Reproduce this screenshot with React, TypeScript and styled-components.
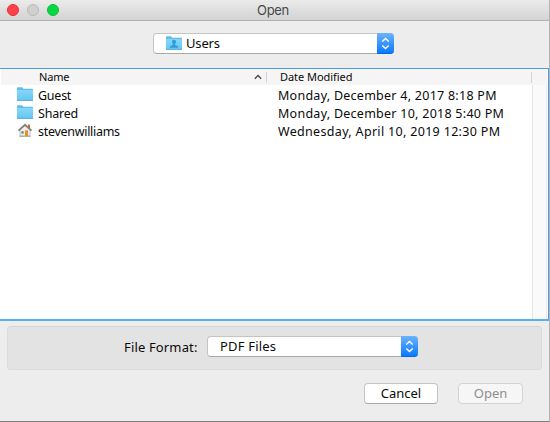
import React from 'react';
import styled, { createGlobalStyle } from 'styled-components';

const Global = createGlobalStyle`
  * { box-sizing: border-box; }
  body { margin: 0; background: #ededed; }
`;

const Window = styled.div`
  width: 550px;
  height: 422px;
  display: flex;
  flex-direction: column;
  overflow: hidden;
  background: #ededed;
  border-right: 1px solid #b4b4b4;
  border-bottom: 1px solid #7e7e7e;
  font-family: 'Noto Sans', sans-serif;
  font-size: 13px;
  color: #0a0a0a;
  white-space: nowrap;
`;

const TitleBar = styled.header`
  height: 21px;
  flex: none;
  display: grid;
  grid-template-columns: 66px 1fr 70px;
  align-items: center;
  background: linear-gradient(#ebebeb, #d3d3d3);
  border-bottom: 1px solid #b1b1b1;
  border-top-left-radius: 4px;
`;

const Lights = styled.div`
  display: flex;
  gap: 8px;
  padding-left: 7px;
`;

const Light = styled.span<{ $fill: string; $edge: string }>`
  width: 12px;
  height: 12px;
  border-radius: 50%;
  background: ${(p) => p.$fill};
  border: 1px solid ${(p) => p.$edge};
`;

const Label = styled.span<{ $spacing?: number }>`
  letter-spacing: ${(p) => p.$spacing ?? 0}px;
`;

const Title = styled.h1`
  margin: 0;
  padding-left: 191px;
  font: 400 13px/20px Inter, sans-serif;
  letter-spacing: -0.3px;
  color: #484848;
`;

const LocationBar = styled.div`
  height: 47px;
  flex: none;
  padding: 12px 0 0 153px;
`;

const Select = styled.div<{ $width: number; $pad: number }>`
  width: ${(p) => p.$width}px;
  height: 21px;
  display: flex;
  align-items: center;
  padding-left: ${(p) => p.$pad}px;
  gap: 4px;
  background: #fff;
  border: 1px solid #c4c4c4;
  border-right: 0;
  border-bottom-color: #a9a9a9;
  border-radius: 4px;
  line-height: 19px;
`;

const Stepper = styled.span`
  width: 17px;
  height: 21px;
  flex: none;
  margin: -1px 0 -1px auto;
  display: grid;
  place-items: center;
  border-radius: 0 4px 4px 0;
  background: linear-gradient(#6cb3fa, #0a7aff);
  border-bottom: 1px solid #0768df;
`;

const FileTable = styled.main`
  height: 253px;
  flex: none;
  display: flex;
  flex-direction: column;
  background: #fff;
  border-top: 1px solid #4a9fe4;
  border-right: 1px solid #4a9fe4;
  border-bottom: 2px solid #58aef5;
  padding: 0 1px;
`;

const TableHead = styled.div`
  height: 16px;
  flex: none;
  display: grid;
  grid-template-columns: 266px 265px 1fr;
  align-items: center;
  background: #f5f5f5;
  font-size: 11px;
`;

const HeadCell = styled.div<{ $pad: number }>`
  height: 11px;
  line-height: 9px;
  display: flex;
  align-items: center;
  justify-content: space-between;
  padding: 0 4px 0 ${(p) => p.$pad}px;
  border-right: 1px solid #d4d4d4;

  ${Label} {
    padding-bottom: 2px;
  }
`;

const TableBody = styled.div`
  flex: 1;
  display: flex;
`;

const Rows = styled.div`
  flex: 1;
  padding-top: 1px;
  font-size: 12.5px;
`;

const Row = styled.div`
  height: 18px;
  display: grid;
  grid-template-columns: 16px 21px 240px 1fr;
  grid-template-rows: 18px;
  align-items: center;
  line-height: 18px;

  ${Label} {
    padding-top: 2px;
  }
`;

const FileIcon = styled.svg`
  width: 16px;
  height: 14px;
  flex: none;
  margin-bottom: 2px;
`;

const Track = styled.div`
  width: 15px;
  background: #fafafa;
  border-left: 1px solid #e6e6e6;
  border-right: 1px solid #ececec;
`;

const FormatPanel = styled.section`
  width: 535px;
  height: 44px;
  flex: none;
  margin: 5px 0 0 7px;
  display: flex;
  align-items: flex-start;
  padding-top: 9px;
  background: #e3e3e3;
  border: 1px solid #dcdcdc;
  border-top-color: #d2d2d2;
  border-radius: 4px;
`;

const FormatLabel = styled.label`
  width: 199px;
  padding-left: 116px;
  line-height: 23px;
`;

const Actions = styled.footer`
  display: flex;
  gap: 20px;
  padding: 13px 0 0 364px;
`;

const Button = styled.button<{ $width: number }>`
  width: ${(p) => p.$width}px;
  height: 21px;
  padding: 0;
  font: inherit;
  line-height: 19px;
  color: #0a0a0a;
  background: #fff;
  border: 1px solid #c4c4c4;
  border-bottom-color: #a9a9a9;
  border-radius: 4px;
  &:disabled {
    color: #8e8e8e;
    background: #f6f6f6;
    border-color: #d3d3d3;
  }
`;

const Arrows = () => (
  <svg width="17" height="20" viewBox="0 0 17 20" fill="none" stroke="#fff" strokeWidth="1.5">
    <path d="M5.3 8.5 8.5 5.5l3.2 3M5.3 12.5l3.2 3 3.2-3" />
  </svg>
);

const Folder = ({ person = false }: { person?: boolean }) => (
  <FileIcon viewBox="0 0 16 14">
    <defs>
      <linearGradient id="folder" x2="0" y2="1">
        <stop stopColor="#86d6f8" />
        <stop offset="1" stopColor="#66c8f4" />
      </linearGradient>
    </defs>
    <path d="M0 13.5V1.2Q0 .3.9.3H5l1.4 1.5h8.8q.8 0 .8.8v10.9z" fill="#5fbde8" />
    <path d="M0 3h16v10H0z" fill="url(#folder)" />
    <path d="M0 13.4h16" stroke="#489fca" strokeWidth=".8" />
    {person && <path d="M8 3.8a2 2 0 0 0-2 2c0 1 .5 1.6 1 2v1l-3 1.4v1.6h8v-1.6L9 8.8v-1c.5-.4 1-1 1-2a2 2 0 0 0-2-2z" fill="#2f9bd8" />}
  </FileIcon>
);

const House = () => (
  <FileIcon viewBox="0 0 16 14">
    <path d="M11 1.5h2v4h-2z" fill="#c66c3c" />
    <path d="M3 6.5 8 2l5 4.5V13H3z" fill="#f1efeb" stroke="#a9a9a9" strokeWidth=".7" />
    <path d="M1.5 7.6 8 1.7l6.5 5.9" fill="none" stroke="#85817d" strokeWidth="1.9" />
    <path d="M4.3 8.2h2.4v2.4H4.3z" fill="#718496" />
    <path d="M8 7.4h3V13H8z" fill="#ef8c21" />
    <path d="M2.3 13.3h11.4" stroke="#9aa085" strokeWidth=".9" />
  </FileIcon>
);

const files = [
  { name: 'Guest', spacing: -0.25, date: 'Monday, December 4, 2017 8:18 PM', dateSpacing: 0.26, icon: <Folder /> },
  { name: 'Shared', spacing: -0.22, date: 'Monday, December 10, 2018 5:40 PM', dateSpacing: 0.26, icon: <Folder /> },
  { name: 'stevenwilliams', spacing: -0.29, date: 'Wednesday, April 10, 2019 12:30 PM', dateSpacing: 0.32, icon: <House /> },
];

export default function App() {
  return (
    <Window>
      <Global />
      <TitleBar>
        <Lights>
          <Light $fill="#ff3f49" $edge="#e52e36" />
          <Light $fill="#d0d0d0" $edge="#b9b9b9" />
          <Light $fill="#05d845" $edge="#10bc3a" />
        </Lights>
        <Title>Open</Title>
      </TitleBar>
      <LocationBar>
        <Select $width={241} $pad={12}>
          <Folder person />
          <Label $spacing={-0.15}>Users</Label>
          <Stepper><Arrows /></Stepper>
        </Select>
      </LocationBar>
      <FileTable>
        <TableHead>
          <HeadCell $pad={38}>
            <Label $spacing={-0.2}>Name</Label>
            <svg width="8" height="6" viewBox="0 0 8 6" fill="none" stroke="#444" strokeWidth="1.3">
              <path d="M.8 4.7 4 1.5l3.2 3.2" />
            </svg>
          </HeadCell>
          <HeadCell $pad={13}><Label $spacing={-0.05}>Date Modified</Label></HeadCell>
        </TableHead>
        <TableBody>
          <Rows>
            {files.map((f) => (
              <Row key={f.name}>
                <span />
                {f.icon}
                <Label $spacing={f.spacing}>{f.name}</Label>
                <Label $spacing={f.dateSpacing}>{f.date}</Label>
              </Row>
            ))}
          </Rows>
          <Track />
        </TableBody>
      </FileTable>
      <FormatPanel>
        <FormatLabel><Label $spacing={0.15}>File Format:</Label></FormatLabel>
        <Select $width={211} $pad={12}>
          <Label $spacing={0.2}>PDF Files</Label>
          <Stepper><Arrows /></Stepper>
        </Select>
      </FormatPanel>
      <Actions>
        <Button $width={74}>Cancel</Button>
        <Button $width={65} disabled>Open</Button>
      </Actions>
    </Window>
  );
}
